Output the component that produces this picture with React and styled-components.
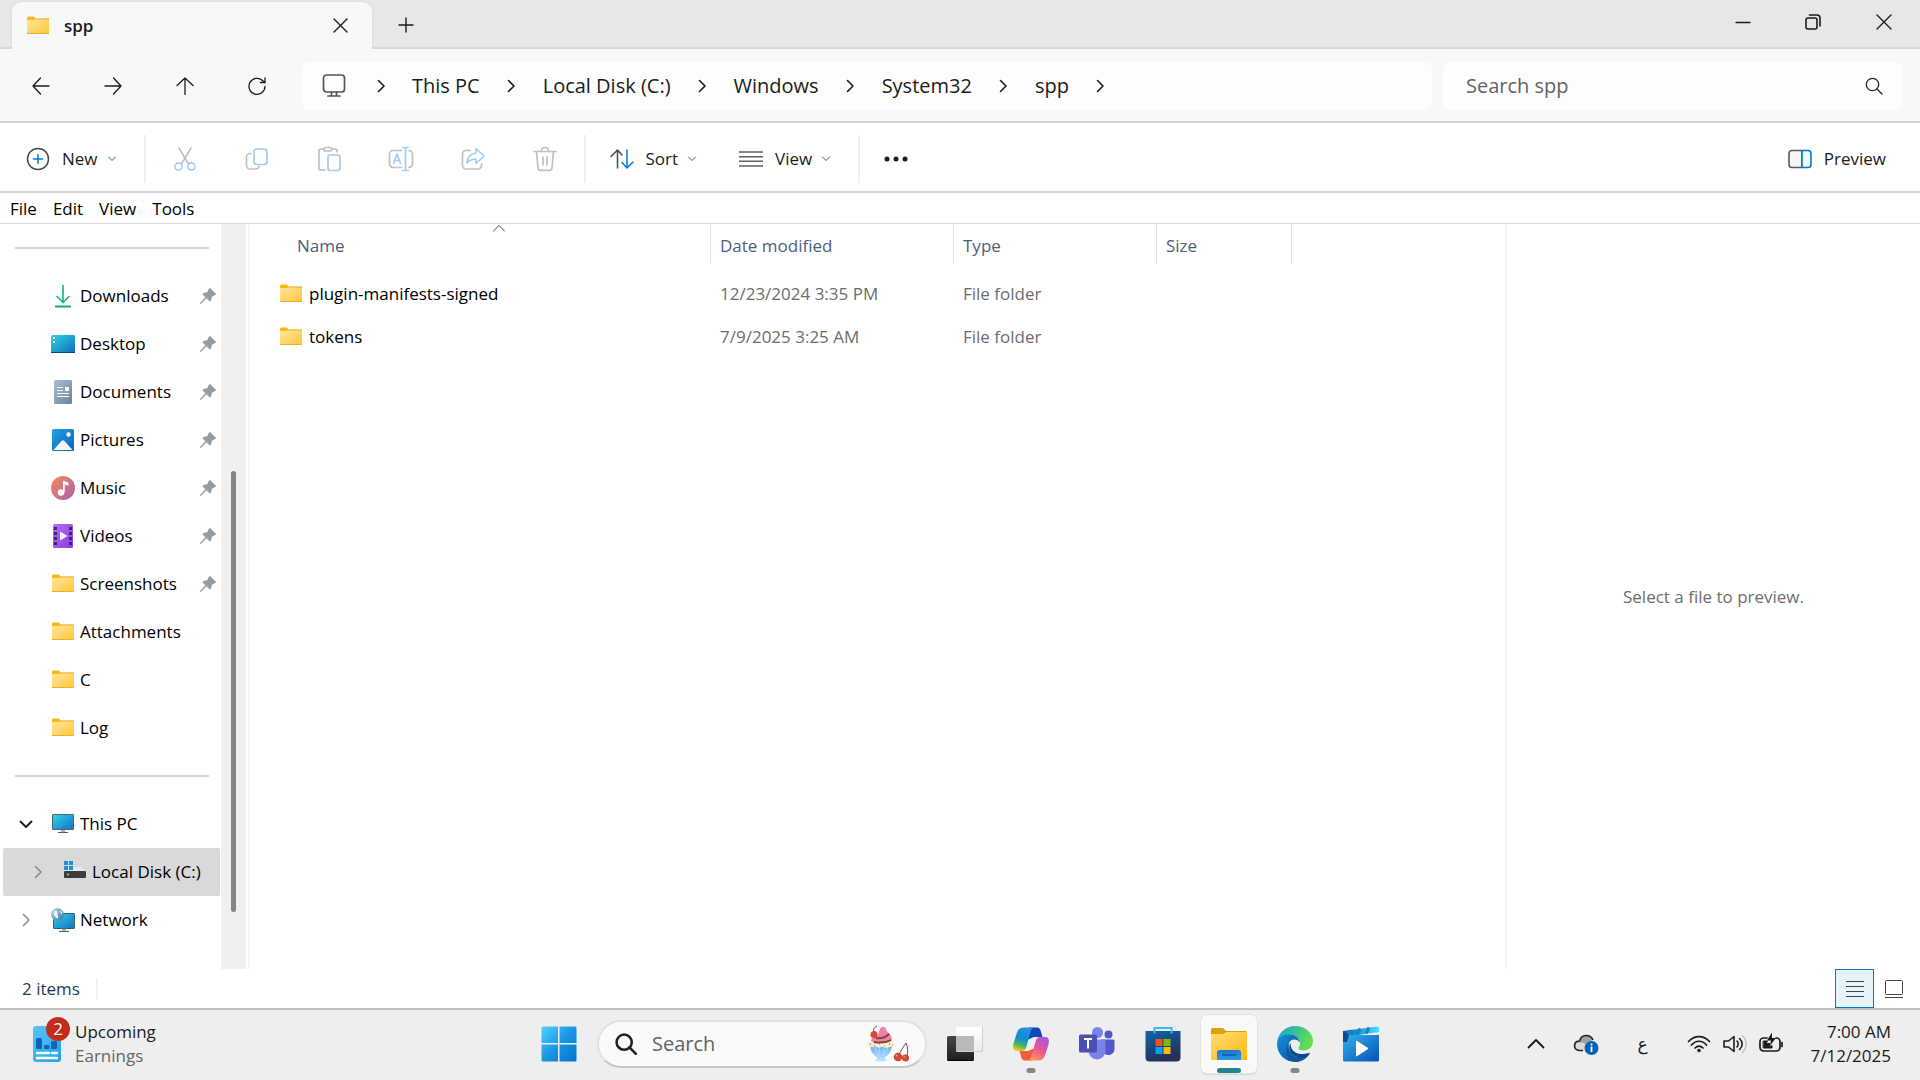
import React from "react";
import styled, { createGlobalStyle } from "styled-components";

const GlobalStyle = createGlobalStyle`
  *, *::before, *::after { box-sizing: border-box; }
  body {
    margin: 0;
    background: #fff;
    color: #1b1b1b;
    font-family: "Open Sans", "Noto Sans", sans-serif;
    font-size: 17px;
    line-height: 24px;
  }
  button, input { font: inherit; color: inherit; }
  button { background: none; border: 0; padding: 0; cursor: default; }
  a { color: inherit; text-decoration: none; }
`;

/* ---------- layout ---------- */

const Window = styled.div`
  min-height: 100vh;
  display: flex;
  flex-direction: column;
`;

const Svg = styled.svg.attrs({ fill: "none", "aria-hidden": true })`
  display: block;
  flex: none;
`;

const TitleBar = styled.header`
  display: flex;
  height: 49px;
  padding-left: 12px;
  background: #e7e7e7;
  box-shadow: inset 0 -2px #d9d9d9;
`;

const Tab = styled.div`
  display: flex;
  align-items: center;
  width: 360px;
  margin-top: 2px;
  padding: 0 20px 0 14px;
  border-radius: 9px 9px 0 0;
  background: #f8f8f8;
  box-shadow: 0 0 2px #cfcfcf;
  clip-path: inset(-3px -3px 0 -3px);
`;

const TabTitle = styled.span`
  flex: 1;
  padding-left: 14px;
  font-weight: 600;
`;

const SquareButton = styled.button`
  display: grid;
  place-items: center;
  width: ${(p) => p.$w || 48}px;
  height: ${(p) => p.$h || 48}px;
  flex: none;
`;

const TabClose = styled(SquareButton)`
  width: 24px;
  height: 24px;
`;

const Caption = styled.div`
  display: flex;
  margin-left: auto;
`;

const NavBar = styled.div`
  display: flex;
  align-items: center;
  height: 74px;
  padding: 2px 17px 0;
  background: #f8f8f8;
  border-bottom: 2px solid #d3d3d3;
`;

const NavButtons = styled.nav`
  display: flex;
  gap: 24px;
  margin-right: 21px;
`;

const AddressBar = styled.nav`
  flex: 1110;
  display: flex;
  align-items: center;
  height: 48px;
  padding-left: 20px;
  border-radius: 7px;
  background: #fdfdfd;
`;

const PlaceIcon = styled.span`
  margin-right: 3px;
`;

const Crumb = styled.a`
  font-size: 20px;
  white-space: nowrap;
`;

const CrumbArrow = styled.span`
  display: grid;
  place-items: center;
  width: 63px;
`;

const SearchBox = styled.label`
  flex: 417;
  display: flex;
  align-items: center;
  height: 48px;
  margin-left: 11px;
  padding: 0 20px 0 23px;
  border-radius: 7px;
  background: #fdfdfd;
`;

const SearchInput = styled.input`
  flex: 1;
  min-width: 0;
  padding: 0;
  border: 0;
  outline: 0;
  background: transparent;
  font-size: 20px;
  &::placeholder { color: #636363; opacity: 1; }
`;

const CommandBar = styled.div`
  display: flex;
  align-items: center;
  height: 70px;
  padding: 4px 22px 0 14px;
  border-bottom: 2px solid #d5d5d5;
`;

const Command = styled.button`
  display: flex;
  align-items: center;
  gap: 12px;
  height: 48px;
  padding: 0 12px;
`;

const Caret = styled.span`
  margin-left: -3px;
`;

const CommandGroup = styled.div`
  display: flex;
  gap: ${(p) => p.$gap || 18}px;
`;

const Divider = styled.span`
  width: 2px;
  height: 48px;
  margin: 0 ${(p) => p.$after || 15}px 0 15px;
  background: #efefef;
`;

const Push = styled.div`
  margin-left: auto;
`;

const MenuBar = styled.nav`
  display: flex;
  align-items: center;
  gap: 16px;
  height: 31px;
  padding: 2px 0 0 10px;
  border-bottom: 1px solid #d9d9d9;
`;

const MenuItem = styled.button`
  color: #000;
`;

const Body = styled.div`
  flex: 1;
  display: flex;
`;

const Sidebar = styled.nav`
  width: 221px;
  flex: none;
`;

const Rule = styled.hr`
  height: 2px;
  margin: 23px 12px 23px 15px;
  border: 0;
  background: #d5d5d5;
`;

const SideItem = styled.a`
  display: flex;
  align-items: center;
  gap: 5px;
  height: 48px;
  margin: 0 1px 0 3px;
  padding: 0 4px 0 ${(p) => (p.$nested ? 24 : 12)}px;
  border-radius: 2px;
  background: ${(p) => (p.$selected ? "#d9d9d9" : "transparent")};
  color: #000;
  white-space: nowrap;
`;

const Expander = styled.span`
  display: grid;
  place-items: center;
  width: 22px;
  margin-right: 9px;
`;

const SideLabel = styled.span`
  flex: 1;
`;

const ScrollTrack = styled.div`
  display: flex;
  flex-direction: column;
  align-items: center;
  width: 25px;
  flex: none;
  background: #f0f0f0;
`;

const ScrollSpace = styled.span`
  flex: ${(p) => p.$grow};
`;

const ScrollThumb = styled.span`
  flex: 441;
  width: 5px;
  border-radius: 3px;
  background: #858585;
`;

const Content = styled.main`
  flex: 1;
  margin-left: 2px;
  border-left: 2px solid #f5f5f5;
`;

const FileTable = styled.table`
  width: 1042px;
  table-layout: fixed;
  border-collapse: separate;
  border-spacing: 0;
  tbody::before { content: ""; display: block; height: 8px; }
`;

const Col = styled.col`
  width: ${(p) => p.$w}px;
`;

const HeadCell = styled.th`
  position: relative;
  height: 40px;
  padding: 3px 0 0 ${(p) => (p.$first ? 47 : 9)}px;
  border-right: 1px solid #e0e0e0;
  text-align: left;
  font-weight: 400;
  color: #4c607a;
`;

const SortMark = styled.span`
  position: absolute;
  top: 0;
  left: 50%;
  margin-left: 12px;
`;

const Cell = styled.td`
  height: 43px;
  padding: 0 0 0 9px;
  color: #6d6d6d;
`;

const NameCell = styled(Cell)`
  padding-left: 29px;
  color: #000;
`;

const FileName = styled.span`
  display: flex;
  align-items: center;
  gap: 6px;
`;

const PreviewPane = styled.aside`
  display: grid;
  place-items: center;
  width: 415px;
  flex: none;
  border-left: 2px solid #f5f5f5;
  color: #6d6d6d;
`;

const StatusBar = styled.footer`
  display: flex;
  align-items: center;
  height: 41px;
  padding: 0 7px 0 22px;
  border-bottom: 2px solid #bfbfbf;
  color: #1e395b;
`;

const StatusMark = styled.span`
  width: 2px;
  height: 21px;
  margin-left: 16px;
  background: #f2f2f2;
`;

const ViewToggle = styled.button`
  display: grid;
  place-items: center;
  width: 39px;
  height: 39px;
  border: 1px solid ${(p) => (p.$on ? "#0078d4" : "transparent")};
  background: ${(p) => (p.$on ? "#e5f3fb" : "transparent")};
`;

const ViewToggles = styled.div`
  display: flex;
  margin-left: auto;
`;

const Taskbar = styled.footer`
  display: grid;
  grid-template-columns: 1fr auto 1fr;
  align-items: center;
  height: 70px;
  padding-bottom: 2px;
  background: #eee;
`;

const Widget = styled.button`
  display: flex;
  align-items: center;
  gap: 11px;
  padding-left: 30px;
  text-align: left;
`;

const WidgetText = styled.span`
  display: flex;
  flex-direction: column;
`;

const Muted = styled.span`
  color: #666;
`;

const WidgetIcon = styled.span`
  position: relative;
`;

const Badge = styled.span`
  position: absolute;
  top: -9px;
  left: 16px;
  width: 24px;
  height: 24px;
  border-radius: 50%;
  background: #c42b1c;
  color: #fff;
  text-align: center;
`;

const Apps = styled.div`
  display: flex;
  align-items: center;
  gap: 10px;
`;

const AppButton = styled.button`
  position: relative;
  display: grid;
  place-items: center;
  width: 56px;
  height: 58px;
  border-radius: 6px;
  background: ${(p) => (p.$active ? "#f9f9f9" : "transparent")};
  box-shadow: ${(p) => (p.$active ? "0 0 0 1px #e3e3e3, 0 2px 1px #d6d6d6" : "none")};
`;

const Running = styled.span`
  position: absolute;
  bottom: 0;
  left: 50%;
  width: ${(p) => (p.$active ? 24 : 9)}px;
  height: 5px;
  border-radius: 3px;
  transform: translateX(-50%);
  background: ${(p) => (p.$active ? "#24838f" : "#868686")};
`;

const TaskSearch = styled.label`
  display: flex;
  align-items: center;
  gap: 15px;
  width: 330px;
  height: 48px;
  padding: 0 16px;
  border: 2px solid #e1e1e1;
  border-bottom-color: #c8c8c8;
  border-radius: 24px;
  background: #fafafa;
`;

const Tray = styled.div`
  display: flex;
  align-items: center;
  justify-content: flex-end;
  padding-right: 29px;
`;

const TrayButton = styled.button`
  display: flex;
  align-items: center;
  justify-content: center;
  gap: 12px;
  height: 48px;
  margin-right: ${(p) => p.$after || 0}px;
`;

const Lang = styled(TrayButton)`
  width: 24px;
  font-family: "DejaVu Sans", sans-serif;
`;

const Clock = styled.button`
  display: flex;
  flex-direction: column;
  align-items: flex-end;
`;

/* ---------- line icons ---------- */

const Line = ({ s = 20, w = 1.4, c = "#1b1b1b", d, h, children }) => (
  <Svg width={s} height={h || s} viewBox={`0 0 ${s} ${h || s}`} stroke={c} strokeWidth={w} strokeLinecap="round" strokeLinejoin="round">
    {d && <path d={d} />}
    {children}
  </Svg>
);

const ChevronRight = ({ c = "#1b1b1b", w = 1.6 }) => <Line s={14} w={w} c={c} d="M4.5 1.5 10 7l-5.500 5.500" />;
const ChevronDown = () => <Caret><Line s={10} w={1} c="#555" d="M1.500 3 5 6.500 8.500 3" /></Caret>;
const Cross = ({ s = 16 }) => <Line s={s} w={1.4} d={`M1 1 ${s - 1} ${s - 1}M${s - 1} 1 1 ${s - 1}`} />;
const GREY = "#c0c0c0";
const SKY = "#a3cdf0";

const NewIcon = () => (
  <Line s={24} c="#4a4a4a" w={1.5}>
    <circle cx="12" cy="12" r="10.500" />
    <path d="M12 7.500v9M7.500 12h9" stroke="#0078d4" />
  </Line>
);
const CutIcon = () => (
  <Line s={26} c={GREY} w={1.6}>
    <path d="M7 2l9.500 16M19 2 9.500 18" />
    <circle cx="6.500" cy="20.500" r="3.600" stroke={SKY} />
    <circle cx="19.500" cy="20.500" r="3.600" stroke={SKY} />
  </Line>
);
const CopyIcon = () => (
  <Line s={26} c={GREY} w={1.7}>
    <path d="M7 7.500H6a3.500 3.500 0 0 0-3.500 3.500v8.500A3.500 3.500 0 0 0 6 23h5.500a3.500 3.500 0 0 0 3.500-3" />
    <rect x="10" y="3" width="13" height="15.500" rx="3" stroke={SKY} />
  </Line>
);
const PasteIcon = () => (
  <Line s={26} c={GREY} w={1.7}>
    <path d="M9 24H5a2 2 0 0 1-2-2V5a2 2 0 0 1 2-2h3M16 3h3a2 2 0 0 1 2 2v1" />
    <rect x="8" y="1.500" width="8" height="3.500" rx="1.700" />
    <rect x="12" y="9" width="12" height="15.500" rx="2" stroke={SKY} />
  </Line>
);
const RenameIcon = () => (
  <Line s={26} c={GREY} w={1.7}>
    <path d="M13.500 4.500H5A3.500 3.500 0 0 0 1.500 8v10A3.500 3.500 0 0 0 5 21.500h8.500M21 4.500a3.500 3.500 0 0 1 3.500 3.500v10a3.500 3.500 0 0 1-3.500 3.500" />
    <path d="M17.500 2v22M14.500 1.500h6M14.500 24.500h6M5.500 17.500 9 8l3.500 9.500M6.700 14.500h4.600" stroke={SKY} />
  </Line>
);
const ShareIcon = () => (
  <Line s={26} c={GREY} w={1.7}>
    <path d="M10 4.500H6A3.500 3.500 0 0 0 2.500 8v11.500A3.500 3.500 0 0 0 6 23h12a3.500 3.500 0 0 0 3.500-3.500V18" />
    <path d="M16 2.500 24 10l-8 7.500V13c-4.500 0-7 1.500-9 4 .5-6 4-9.500 9-10z" stroke={SKY} />
  </Line>
);
const DeleteIcon = () => (
  <Line s={26} c={GREY} w={1.7} d="M2 5.500h22M9.500 5C9.500 3 11 1.500 13 1.500S16.500 3 16.500 5M4.500 5.500 6 22a2.500 2.500 0 0 0 2.500 2.300h9A2.500 2.500 0 0 0 20 22l1.500-16.500M11 11v8M15 11v8" />
);
const SortIcon = () => (
  <Line s={24} c="#4a4a4a" w={1.5}>
    <path d="M7.500 21V3M1 9.500 7.500 3 12 8" />
    <path d="M17 3v18M12 15.500 17 21l6-6" stroke="#0078d4" />
  </Line>
);
const ListIcon = () => (
  <Svg width="24" height="18" viewBox="0 0 24 18" stroke="#606060" strokeWidth="1.500">
    <path d="M0 2h24M0 6.700h24M0 11.300h24M0 16h24" />
  </Svg>
);
const PreviewIcon = () => (
  <Line s={24} w={1.6}>
    <path d="M14 3.500H4A3 3 0 0 0 1 6.500v11a3 3 0 0 0 3 3h10z" stroke="#5a5a5a" fill="#f5f5f5" />
    <path d="M14 3.500h6a3 3 0 0 1 3 3v11a3 3 0 0 1-3 3h-6z" stroke="#0078d4" fill="#f3f9fd" />
  </Line>
);
const MonitorIcon = () => (
  <Line s={24} c="#555" w={1.7}>
    <rect x="1.500" y="1" width="21" height="17" rx="3" />
    <path d="M9.500 18v3.500M14.500 18v3.500M6 22h12" />
  </Line>
);
const Magnifier = ({ s = 18, w = 1.3 }) => (
  <Svg width={s} height={s} viewBox="0 0 18 18" stroke="#222" strokeWidth={w} strokeLinecap="round">
    <circle cx="7.500" cy="7.500" r="6.200" />
    <path d="m12 12 5 5" />
  </Svg>
);
const Pin = () => (
  <Svg width="16" height="16" viewBox="0 0 16 16">
    <path fill="#929da4" d="M9 .6c.4-.7 1-.7 1.500-.2l5.100 5.100c.5.500.4 1.100-.2 1.400l-3.300 1.700-1.300 4.300c-.2.600-.8.800-1.300.3L6.600 10.300 1.500 15.600 0 16l.4-1.600 5-5.200-2.600-2.700c-.5-.5-.3-1.100.3-1.300l4.200-1.300z" />
  </Svg>
);

/* ---------- colour icons ---------- */

const Grad = ({ id, from, to, x2 = 1, y2 = 1 }) => (
  <linearGradient id={id} x1="0" y1="0" x2={x2} y2={y2}>
    <stop stopColor={from} />
    <stop offset="1" stopColor={to} />
  </linearGradient>
);

const Folder = () => (
  <Svg width="24" height="24" viewBox="0 0 24 24">
    <defs><Grad id="fold" from="#ffe69c" to="#ffc83d" /></defs>
    <path d="M1 4A1.500 1.500 0 0 1 2.500 2.500H8l1.500 2L8 6.500H1z" fill="#fbb717" />
    <path d="M1 6.500h7l1.500-2H23v15H1z" fill="url(#fold)" />
    <path d="M9 5h14" stroke="#edab2b" />
    <path d="M1 19.500h22" stroke="#eeb02f" />
  </Svg>
);
const DownloadsIcon = () => (
  <Svg width="24" height="24" viewBox="0 0 24 24" strokeWidth="1.700">
    <path d="M12 1v17M5.500 12l6.500 6.500 6.500-6.500" stroke="#25b78b" />
    <path d="M4 22.500h16" stroke="#1aa384" strokeWidth="2" />
  </Svg>
);
const DesktopIcon = () => (
  <Svg width="24" height="24" viewBox="0 0 24 24">
    <defs><Grad id="desk" from="#2fd3e4" to="#0f6cbd" /></defs>
    <rect y="3" width="24" height="18" rx="1.500" fill="url(#desk)" />
    <path d="M0 20.500h24" stroke="#0b4b80" />
    <path d="M2 5h2v2H2zM2 9h2v2H2z" fill="#fff" />
  </Svg>
);
const DocumentsIcon = () => (
  <Svg width="24" height="24" viewBox="0 0 24 24">
    <defs><Grad id="doc" from="#aebfd2" to="#64839f" /></defs>
    <rect x="3" width="18" height="24" rx="1.500" fill="url(#doc)" />
    <path d="M6 7.500h6M6 10.500h6M6 13.500h12M6 16.500h12" stroke="#fff" />
    <path d="M14 7h4v4h-4z" fill="#fff" />
  </Svg>
);
const PicturesIcon = () => (
  <Svg width="24" height="24" viewBox="0 0 24 24">
    <defs><Grad id="pic" from="#1fa2ea" to="#0c63b8" /></defs>
    <rect x="1" y="1" width="22" height="22" rx="1.500" fill="url(#pic)" />
    <path d="m2.500 22 8-9q1.500-1.500 3 0l8 9z" fill="#f2f8fd" />
    <circle cx="17.500" cy="6.500" r="2.200" fill="#fff" />
  </Svg>
);
const MusicIcon = () => (
  <Svg width="24" height="24" viewBox="0 0 24 24">
    <defs><Grad id="mus" from="#f58b55" to="#a95fb3" /></defs>
    <circle cx="12" cy="12" r="12" fill="url(#mus)" />
    <circle cx="10" cy="16.500" r="3.200" fill="#fff" />
    <path d="M12 16.500V4.500l5.500 2v3.300l-3.800-1.300v8z" fill="#fff" />
  </Svg>
);
const VideosIcon = () => (
  <Svg width="24" height="24" viewBox="0 0 24 24">
    <defs><Grad id="vid" from="#b36cf0" to="#8a3fe0" /></defs>
    <rect x="2" width="20" height="24" rx="1.500" fill="url(#vid)" />
    <path d="M4.500 3v19M19.500 3v19" stroke="#41207a" strokeWidth="3" strokeDasharray="3 2" />
    <path d="M9 7.500 16.500 12 9 16.500z" fill="#f6f0fc" />
  </Svg>
);
const PcIcon = () => (
  <Svg width="24" height="24" viewBox="0 0 24 24">
    <defs><Grad id="pc" from="#36d4e6" to="#1170c4" /></defs>
    <path d="M10 18h4v3h-4z" fill="#a9b1b6" />
    <path d="M7 20.500h10" stroke="#4f5b62" />
    <rect x="1.500" y="2.500" width="21" height="15" rx=".5" fill="url(#pc)" stroke="#4b6470" />
  </Svg>
);
const DiskIcon = () => (
  <Svg width="24" height="24" viewBox="0 0 24 24">
    <path d="M3 7h16l4 5H1z" fill="#e8e8ec" />
    <rect x="1" y="11" width="22" height="7" rx="1" fill="#3c3c3c" />
    <circle cx="5" cy="14.500" r="1.200" fill="#3edc4a" />
    <path d="M1 1h4v4H1zM6 1h4v4H6zM1 6h4v4H1zM6 6h4v4H6z" fill="#1591e0" />
  </Svg>
);
const NetworkIcon = () => (
  <Svg width="24" height="24" viewBox="0 0 24 24">
    <defs><Grad id="glb" from="#b9d9ea" to="#2b78a8" /></defs>
    <path d="M11 20h4v3h-4z" fill="#a9b1b6" />
    <path d="M8 23.500h10" stroke="#4f5b62" />
    <rect x="2.500" y="5.500" width="21" height="15" rx=".5" fill="url(#pc)" stroke="#3b6274" />
    <circle cx="6.500" cy="6.500" r="6.500" fill="url(#glb)" />
    <path d="M3 3c2-1 4 0 3.500 2S8 8 7 10 4 8 2.500 6.500zM9 2l2.500 2.500-1.500 2z" fill="#e3f1f7" />
  </Svg>
);

const WidgetArt = () => (
  <Svg width="34" height="36" viewBox="0 0 34 36">
    <defs><Grad id="wid" from="#5bc3f5" to="#23a2ea" /></defs>
    <rect x="3" width="28" height="36" rx="3" fill="url(#wid)" />
    <rect x="6" y="12" width="6" height="11" rx="1.500" fill="#0a65b5" />
    <rect x="14" y="19" width="5.500" height="4" rx="1.500" fill="#0a65b5" />
    <rect x="21" y="15" width="6" height="8" rx="1.500" fill="#0a65b5" />
    <path d="M7 27h12M22 27h5M7 32h20" stroke="#fff" strokeWidth="2.400" strokeLinecap="round" />
  </Svg>
);
const StartIcon = () => (
  <Svg width="36" height="36" viewBox="0 0 36 36">
    <defs>
      <linearGradient id="win" gradientUnits="userSpaceOnUse" x1="0" y1="0" x2="36" y2="36">
        <stop stopColor="#52d3ff" /><stop offset=".5" stopColor="#1a96e4" /><stop offset="1" stopColor="#0473cf" />
      </linearGradient>
    </defs>
    <path fill="url(#win)" d="M2 .5h15v16.500H.5V2A1.500 1.500 0 0 1 2 .5zM18.500.5H34A1.500 1.500 0 0 1 35.500 2v15h-17zM.5 18.500H17v17H2A1.500 1.500 0 0 1 .5 34zM18.500 18.500h17V34a1.500 1.500 0 0 1-1.500 1.500H18.500z" />
  </Svg>
);
const Sundae = () => (
  <Svg width="42" height="36" viewBox="0 0 42 36">
    <defs><Grad id="bowl" from="#5cabf2" to="#c5e4fb" x2={0} /></defs>
    <path d="M3 18h22c0 7-3 11-7 13v2l2.500 1.500-3 1h-7l-3-1L10 33v-2C6 29 3 25 3 18z" fill="url(#bowl)" />
    <path d="M8 21l3 9M12 21l1 10M17 21l-1 10M21 21l-3 8" stroke="#a9d6fa" strokeWidth="1.100" />
    <path d="M0 18c1-2 3-3 6-3h16c3 0 5 1 6 3-2 3-4 2-6 3s-4 1-6 0-4 2-6 0-4 1-6 0-3 0-4-3z" fill="#fbeed2" />
    <path d="M3 18h1M12 18h1M22 18h1" stroke="#e66a63" strokeWidth="1.500" />
    <path d="M7 20h1M17 20h1M25 19h1" stroke="#f2b13c" strokeWidth="1.500" />
    <path d="M4 15c0-3 3-4 6-5 2-3 2-5 3-7 1-3 5-3 6 0 0 3 4 4 5 7 1 2 1 4 0 5-3 2-17 3-20 0z" fill="#ee82ac" />
    <path d="M9 12c6 1 10-1 13-4M7 16c6 1 12 1 17-2" stroke="#84443a" strokeWidth="2" />
    <path d="M7 6C6 3 7 1 10 .5M39 17c-3 4-5 8-8 13M39 17c2 4 2 9 1 13" stroke="#7b3035" strokeWidth=".9" />
    <circle cx="7" cy="8.500" r="3.500" fill="#d94436" />
    <circle cx="31" cy="31" r="4.300" fill="#d94436" /><circle cx="38.500" cy="32" r="3.500" fill="#d94436" />
    <circle cx="29.500" cy="29.500" r="1" fill="#f6a093" /><circle cx="37.500" cy="31" r=".8" fill="#f6a093" />
  </Svg>
);
const TaskViewIcon = () => (
  <Svg width="36" height="36" viewBox="0 0 36 36">
    <defs><Grad id="tvd" from="#474747" to="#1d1d1d" x2={0} /><Grad id="tvl" from="#fff" to="#ececec" x2={0} /></defs>
    <rect x="0" y="10" width="27" height="25" rx="1.500" fill="url(#tvd)" />
    <path d="M1 34.500h25" stroke="#000" />
    <rect x="9" y="1" width="27" height="25" rx="1" fill="#cfcfcf" />
    <rect x="9" y="1" width="26" height="24" rx="1" fill="url(#tvl)" />
    <path d="M9 10h17a1 1 0 0 1 1 1v14H9z" fill="#b9b9b9" />
  </Svg>
);
const CopilotIcon = () => (
  <Svg width="36" height="36" viewBox="0 0 36 36">
    <defs>
      <linearGradient id="cpa" x1=".5" y1="0" x2=".2" y2="1"><stop stopColor="#2390e8" /><stop offset=".45" stopColor="#0b8fd0" /><stop offset=".75" stopColor="#4fb463" /><stop offset="1" stopColor="#ffd400" /></linearGradient>
      <linearGradient id="cpb" x1=".8" y1="0" x2=".2" y2="1"><stop stopColor="#a357e6" /><stop offset=".5" stopColor="#ee5690" /><stop offset="1" stopColor="#ff9d5c" /></linearGradient>
    </defs>
    <path d="M16 1.500h8c3 0 3.500 2.500 4.500 6l1 3.500H21l-7 3z" fill="#1446b8" />
    <path d="M20 34.500h-8c-3 0-3.500-2.500-4.500-6l-1-3.500H15l7-3z" fill="#f25b3e" />
    <path d="M11 1.500h11c-3 0-4 2.500-5 6l-3.500 13c-1 3-2 4.500-5 4.500H4c-4 0-4.500-3.500-3.500-7.500L4 6.500c1-3.500 3.500-5 7-5z" fill="url(#cpa)" />
    <path d="M25 34.500H14c3 0 4-2.500 5-6l3.500-13c1-3 2-4.500 5-4.500H32c4 0 4.500 3.500 3.500 7.500L32 29.500c-1 3.500-3.500 5-7 5z" fill="url(#cpb)" />
  </Svg>
);
const TeamsIcon = () => (
  <Svg width="36" height="36" viewBox="0 0 36 36">
    <circle cx="29.500" cy="8.500" r="4" fill="#5059c9" />
    <path d="M22 13.500h12a1.500 1.500 0 0 1 1.500 1.500v8a6 6 0 0 1-10 4.500z" fill="#5059c9" />
    <circle cx="18.500" cy="6.500" r="5.500" fill="#7b83eb" />
    <path d="M11 13.500h14a1.500 1.500 0 0 1 1.500 1.500v10a8.500 8.500 0 0 1-17 0z" fill="#7b83eb" />
    <rect y="8.500" width="18" height="18" rx="1.500" fill="#4b50b8" />
    <path d="M5 13h8M9 13v9.500" stroke="#fff" strokeWidth="2" />
  </Svg>
);
const StoreIcon = () => (
  <Svg width="36" height="36" viewBox="0 0 36 36">
    <defs><Grad id="sto" from="#0a68ae" to="#252f58" x2={0.4} /></defs>
    <path d="M.5 5h35v26.500a4 4 0 0 1-4 4h-27a4 4 0 0 1-4-4z" fill="url(#sto)" />
    <path d="M9.500 7.500V2h17v5.500" stroke="#34bdf3" strokeWidth="2" />
    <path d="M10.500 13h7v7h-7z" fill="#f25022" /><path d="M18.500 13h7v7h-7z" fill="#7fba00" />
    <path d="M10.500 21h7v7h-7z" fill="#00a4ef" /><path d="M18.500 21h7v7h-7z" fill="#ffb900" />
  </Svg>
);
const ExplorerIcon = () => (
  <Svg width="36" height="36" viewBox="0 0 36 36">
    <defs><Grad id="exf" from="#ffdc72" to="#fdb913" /><Grad id="exb" from="#1976c9" to="#2b9be8" x2={0} /></defs>
    <path d="M0 3.500A1.500 1.500 0 0 1 1.500 2H12l3 3h19.500A1.500 1.500 0 0 1 36 6.500V9H0z" fill="#dd9f0c" />
    <path d="M0 8h12l3.500-2H36v28H0z" fill="url(#exf)" />
    <path d="M6 34v-7a3 3 0 0 1 3-3h18a3 3 0 0 1 3 3v7z" fill="url(#exb)" />
    <path d="M11 29h14" stroke="#0f5aa3" strokeWidth="1.500" />
  </Svg>
);
const EdgeIcon = () => (
  <Svg width="36" height="36" viewBox="0 0 36 36">
    <defs>
      <Grad id="edt" from="#159ddd" to="#62df52" y2={0.4} />
      <Grad id="edb" from="#1590dc" to="#0a4f9e" />
    </defs>
    <path d="M0 16C1.500 6.500 9 0 18 0c11 0 18 7.500 18 15 0 6-4.500 9.500-9.500 9.500-3.500 0-5-1.200-5-2.500 0-1 1.500-1.500 1.500-4.500 0-4-4-8-10.500-8C6 9.500 1.500 12 0 16z" fill="url(#edt)" />
    <path d="M0 18C0 12 5 8.500 11 8.500c7 0 11.500 3.500 11.500 8-1-2-3-3-5-3-5 0-7 5-6 10 1 6 5 10 11 12C11 38 0 30 0 18z" fill="url(#edb)" />
    <path d="M13.500 16.500c-3 3-2 8 1 11.500 4 4 11 4.500 18.500-1-3 5.500-8 9-14 9-6 0-9.500-7-9.500-11 0-4 1.500-7 4-8.500z" fill="#11559f" />
    <path d="M14 17c-1.500 5 3.500 11 10 11 5 0 8-1.500 9-1l-1.500 2C27 33 18 32 14.500 28c-3-3.500-3-8-.5-11z" fill="#0c4a8e" />
  </Svg>
);
const FilmIcon = () => (
  <Svg width="36" height="36" viewBox="0 0 36 36">
    <defs><Grad id="flm" from="#2fb2ea" to="#0a50b8" /><Grad id="clp" from="#0a5cab" to="#45e2ff" y2={0} /></defs>
    <path d="M0 5 34.500.5a1.500 1.500 0 0 1 1.500 1.500v4L5 10.500 3.500 16H0z" fill="url(#clp)" />
    <path d="m5 10 3-6M14 9l3-6.500M23 7.500l3-6" stroke="#1583cc" strokeWidth="3" />
    <path d="M0 15.500 5 9h31v25a1.500 1.500 0 0 1-1.500 1.500h-33A1.500 1.500 0 0 1 0 34z" fill="url(#flm)" />
    <path d="M0 5v11h4l2-7z" fill="#0b4b93" />
    <path d="m13.500 15 11.500 7.500L13.500 30z" fill="#fff" stroke="#fff" strokeLinejoin="round" />
  </Svg>
);

const CloudIcon = () => (
  <Svg width="26" height="24" viewBox="0 0 26 24">
    <path d="M7 18.500C3.500 18.500 1.500 16.500 1.500 13.700S3.500 9 6.500 9c1-3.500 3.500-5.500 6.500-5.500 3.500 0 6 2 7 4.500l-7 3-3 7.500z" fill="#a0a0a0" />
    <path d="M7 18C4.500 18 2.500 16.500 2.500 13.700S4.500 10.500 8 10.500c3 0 5 1.500 6 3l-4 4.500z" fill="#dcdcdc" />
    <path d="M10 18.500H7C3.500 18.500 1.500 16.500 1.500 13.700S3.500 9 6.500 9c1-3.500 3.500-5.500 6.500-5.500 3.500 0 6 2 7 4.500" stroke="#222" strokeWidth="1.600" />
    <circle cx="18.500" cy="16" r="7" fill="#0063b8" />
    <path d="M18.500 14.500V20M18.500 11.500v1.700" stroke="#fff" strokeWidth="1.800" />
  </Svg>
);
const WifiIcon = () => (
  <Line s={24} w={1.7}>
    <path d="M1.500 9.500C7.500 3 16.500 3 22.500 9.500M4.500 13c4.500-5 10.500-5 15 0M8 16c2.500-2.500 5.500-2.500 8 0" />
    <circle cx="12" cy="18.500" r="1.800" fill="#1b1b1b" stroke="none" />
  </Line>
);
const VolumeIcon = () => (
  <Line s={24} w={1.6}>
    <path d="M1 9v6h4.500L11 19.500v-15L5.500 9zM14 9c1.500 1.500 1.500 4.500 0 6M16.500 6.500c3.500 3 3.500 8 0 11" />
    <path d="M19.500 3.500c5 5 5 12 0 17" stroke="#c4c4c4" />
  </Line>
);
const BatteryIcon = () => (
  <Line s={24} w={1.700}>
    <path d="M8 6H4.500A3.500 3.500 0 0 0 1 9.500v6A3.500 3.500 0 0 0 4.500 19h13a3.500 3.500 0 0 0 3.500-3.500v-6A3.500 3.500 0 0 0 17.500 6H17M23 10.500v4" />
    <path d="M4.500 9h4L7 11.500h4l-.5 3.500L13 13.500V16H4.500z" fill="#1b1b1b" strokeWidth="1" />
    <path d="M13 .500 8 8.500h4l-1 5L17 6h-4z" fill="#1b1b1b" stroke="none" />
  </Line>
);

/* ---------- data ---------- */

const crumbs = ["This PC", "Local Disk (C:)", "Windows", "System32", "spp"];

const quickAccess = [
  { name: "Downloads", Icon: DownloadsIcon, pinned: true },
  { name: "Desktop", Icon: DesktopIcon, pinned: true },
  { name: "Documents", Icon: DocumentsIcon, pinned: true },
  { name: "Pictures", Icon: PicturesIcon, pinned: true },
  { name: "Music", Icon: MusicIcon, pinned: true },
  { name: "Videos", Icon: VideosIcon, pinned: true },
  { name: "Screenshots", Icon: Folder, pinned: true },
  { name: "Attachments", Icon: Folder },
  { name: "C", Icon: Folder },
  { name: "Log", Icon: Folder },
];

const files = [
  { name: "plugin-manifests-signed", date: "12/23/2024 3:35 PM", type: "File folder" },
  { name: "tokens", date: "7/9/2025 3:25 AM", type: "File folder" },
];

const fileCommands = [
  ["Cut", CutIcon],
  ["Copy", CopyIcon],
  ["Paste", PasteIcon],
  ["Rename", RenameIcon],
  ["Share", ShareIcon],
  ["Delete", DeleteIcon],
];

const apps = [
  { name: "Task view", Icon: TaskViewIcon },
  { name: "Copilot", Icon: CopilotIcon, running: true },
  { name: "Teams", Icon: TeamsIcon },
  { name: "Store", Icon: StoreIcon },
  { name: "File Explorer", Icon: ExplorerIcon, running: true, active: true },
  { name: "Edge", Icon: EdgeIcon, running: true },
  { name: "Films", Icon: FilmIcon },
];

const navArrows = [
  ["Back", "M1 9h16M8.500 1 1 9l7.500 8"],
  ["Forward", "M17 9H1M9.500 1 17 9l-7.500 8"],
  ["Up", "M9 17.500V1M1 8.500 9 1l8 7.500"],
  ["Refresh", "M17 9.500a8 8 0 1 1-2.500-6L17 5.500M17 1v4.500h-4.500"],
];

/* ---------- page ---------- */

const SideEntry = ({ name, Icon, pinned, arrow, nested, selected }) => (
  <SideItem href="#" $nested={nested} $selected={selected}>
    <Expander>{arrow}</Expander>
    <Icon />
    <SideLabel>{name}</SideLabel>
    {pinned && <Pin />}
  </SideItem>
);

export default function App() {
  return (
    <Window>
      <GlobalStyle />
      <TitleBar>
        <Tab>
          <Folder />
          <TabTitle>spp</TabTitle>
          <TabClose aria-label="Close tab"><Cross s={15} /></TabClose>
        </Tab>
        <SquareButton $w={68} $h={50} aria-label="New tab"><Line s={16} d="M8 1v14M1 8h14" /></SquareButton>
        <Caption>
          <SquareButton $w={70} $h={43} aria-label="Minimize"><Line s={16} w={1.3} d="M1 8.500h14" /></SquareButton>
          <SquareButton $w={70} $h={43} aria-label="Restore">
            <Line s={16} w={1.6}><rect x="1" y="4" width="11" height="11" rx="2" /><path d="M4.500 1H12a3 3 0 0 1 3 3v8" /></Line>
          </SquareButton>
          <SquareButton $w={72} $h={43} aria-label="Close"><Cross /></SquareButton>
        </Caption>
      </TitleBar>

      <NavBar>
        <NavButtons>
          {navArrows.map(([label, d]) => (
            <SquareButton key={label} aria-label={label}><Line s={18} d={d} w={1.3} /></SquareButton>
          ))}
        </NavButtons>
        <AddressBar aria-label="Path">
          <PlaceIcon><MonitorIcon /></PlaceIcon>
          {crumbs.map((c) => (
            <React.Fragment key={c}>
              <CrumbArrow><ChevronRight /></CrumbArrow>
              <Crumb href="#">{c}</Crumb>
            </React.Fragment>
          ))}
          <CrumbArrow><ChevronRight /></CrumbArrow>
        </AddressBar>
        <SearchBox>
          <SearchInput placeholder="Search spp" aria-label="Search spp" />
          <Magnifier />
        </SearchBox>
      </NavBar>

      <CommandBar>
        <Command><NewIcon />New<ChevronDown /></Command>
        <Divider />
        <CommandGroup $gap={24}>
          {fileCommands.map(([label, Icon]) => (
            <SquareButton key={label} aria-label={label}><Icon /></SquareButton>
          ))}
        </CommandGroup>
        <Divider $after={12} />
        <CommandGroup>
          <Command><SortIcon />Sort<ChevronDown /></Command>
          <Command><ListIcon />View<ChevronDown /></Command>
        </CommandGroup>
        <Divider $after={12} />
        <SquareButton aria-label="More">
          <Svg width="26" height="6" viewBox="0 0 26 6">
            <g fill="#1b1b1b"><circle cx="4" cy="3" r="2.500" /><circle cx="13" cy="3" r="2.500" /><circle cx="22" cy="3" r="2.500" /></g>
          </Svg>
        </SquareButton>
        <Push><Command><PreviewIcon />Preview</Command></Push>
      </CommandBar>

      <MenuBar>
        {["File", "Edit", "View", "Tools"].map((m) => <MenuItem key={m}>{m}</MenuItem>)}
      </MenuBar>

      <Body>
        <Sidebar>
          <Rule />
          {quickAccess.map((item) => <SideEntry key={item.name} {...item} />)}
          <Rule />
          <SideEntry name="This PC" Icon={PcIcon} arrow={<Line s={14} w={1.8} d="M1.500 4.500 7 10l5.500-5.500" />} />
          <SideEntry name="Local Disk (C:)" Icon={DiskIcon} arrow={<ChevronRight c="#8a8a8a" />} nested selected />
          <SideEntry name="Network" Icon={NetworkIcon} arrow={<ChevronRight c="#8a8a8a" />} />
        </Sidebar>
        <ScrollTrack>
          <ScrollSpace $grow={247} />
          <ScrollThumb />
          <ScrollSpace $grow={57} />
        </ScrollTrack>
        <Content>
          <FileTable>
            <colgroup><Col $w={461} /><Col $w={243} /><Col $w={203} /><Col $w={135} /></colgroup>
            <thead>
              <tr>
                <HeadCell $first>Name<SortMark><Line s={14} h={8} w={1} c="#444" d="M1.500 7 7 1.500 12.500 7" /></SortMark></HeadCell>
                <HeadCell>Date modified</HeadCell>
                <HeadCell>Type</HeadCell>
                <HeadCell>Size</HeadCell>
              </tr>
            </thead>
            <tbody>
              {files.map((f) => (
                <tr key={f.name}>
                  <NameCell><FileName><Folder />{f.name}</FileName></NameCell>
                  <Cell>{f.date}</Cell>
                  <Cell>{f.type}</Cell>
                  <Cell />
                </tr>
              ))}
            </tbody>
          </FileTable>
        </Content>
        <PreviewPane>Select a file to preview.</PreviewPane>
      </Body>

      <StatusBar>
        2 items
        <StatusMark />
        <ViewToggles>
          <ViewToggle $on aria-label="Details view">
            <Svg width="18" height="18" viewBox="0 0 18 18" stroke="#444"><path d="M0 1.500h18M0 6.500h18M0 11.500h18M0 16.500h18" /></Svg>
          </ViewToggle>
          <ViewToggle aria-label="Large icons view">
            <Svg width="18" height="18" viewBox="0 0 18 18" stroke="#444"><rect x=".5" y=".5" width="17" height="14" rx="1" /><path d="M0 17.500h18" /></Svg>
          </ViewToggle>
        </ViewToggles>
      </StatusBar>

      <Taskbar>
        <Widget>
          <WidgetIcon><WidgetArt /><Badge>2</Badge></WidgetIcon>
          <WidgetText>Upcoming<Muted>Earnings</Muted></WidgetText>
        </Widget>
        <Apps>
          <AppButton aria-label="Start"><StartIcon /></AppButton>
          <TaskSearch>
            <Magnifier s={22} w={2.1} />
            <SearchInput placeholder="Search" aria-label="Search" />
            <Sundae />
          </TaskSearch>
          {apps.map(({ name, Icon, running, active }) => (
            <AppButton key={name} aria-label={name} $active={active}>
              <Icon />
              {running && <Running $active={active} />}
            </AppButton>
          ))}
        </Apps>
        <Tray>
          <TrayButton $after={28} aria-label="Hidden icons"><Line s={18} w={1.8} d="M1.500 12.500 9 5l7.500 7.500" /></TrayButton>
          <TrayButton $after={31} aria-label="OneDrive"><CloudIcon /></TrayButton>
          <Lang $after={33} lang="ar">ع</Lang>
          <TrayButton $after={27} aria-label="Network, sound, battery"><WifiIcon /><VolumeIcon /><BatteryIcon /></TrayButton>
          <Clock><span>7:00 AM</span><span>7/12/2025</span></Clock>
        </Tray>
      </Taskbar>
    </Window>
  );
}
